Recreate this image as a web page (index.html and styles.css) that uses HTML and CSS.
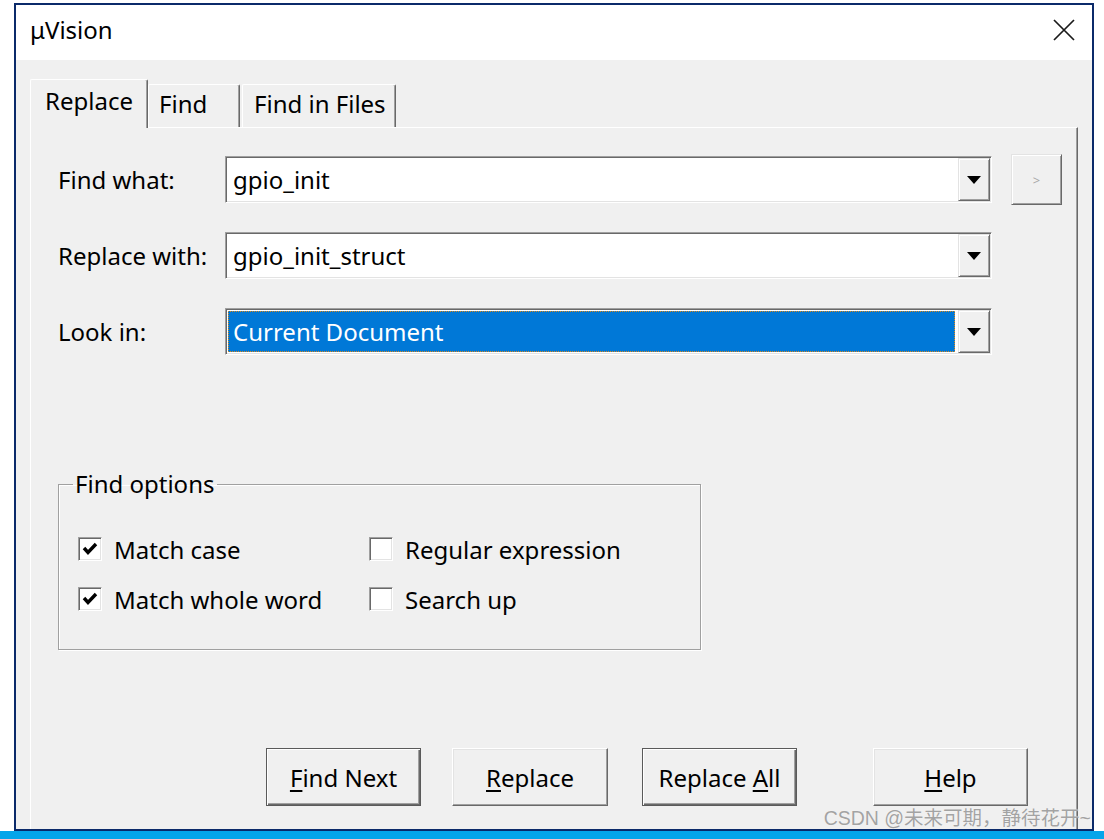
FILE: index.html
```html
<!DOCTYPE html>
<html>
<head>
<meta charset="utf-8">
<title>μVision</title>
<link rel="stylesheet" href="styles.css">
</head>
<body>
<div class="window">
  <div class="titlebar">
    <span class="title">μVision</span>
    <svg class="close" width="22" height="22" viewBox="0 0 22 22">
      <path d="M1 1 L21 21 M21 1 L1 21" stroke="#1a1a1a" stroke-width="1.7" fill="none"/>
    </svg>
  </div>
  <div class="client">
    <div class="tabs">
      <div class="tab tab-active">Replace</div>
      <div class="tab tab-find">Find</div>
      <div class="tab tab-files">Find in Files</div>
    </div>
    <div class="panel">
      <div class="field-row">
        <span class="field-label">Find what:</span>
        <div class="combo">
          <span class="combo-text">gpio_init</span>
          <span class="drop"><svg width="14" height="8" viewBox="0 0 14 8"><polygon points="0,0 14,0 7,8" fill="#000"/></svg></span>
        </div>
        <button class="more-btn">&gt;</button>
      </div>
      <div class="field-row">
        <span class="field-label">Replace with:</span>
        <div class="combo">
          <span class="combo-text">gpio_init_struct</span>
          <span class="drop"><svg width="14" height="8" viewBox="0 0 14 8"><polygon points="0,0 14,0 7,8" fill="#000"/></svg></span>
        </div>
      </div>
      <div class="field-row">
        <span class="field-label">Look in:</span>
        <div class="combo">
          <span class="combo-text combo-selected">Current Document</span>
          <span class="drop"><svg width="14" height="8" viewBox="0 0 14 8"><polygon points="0,0 14,0 7,8" fill="#000"/></svg></span>
        </div>
      </div>

      <fieldset class="options">
        <legend>Find options</legend>
        <div class="options-grid">
          <label class="check"><span class="box"><svg width="22" height="22" viewBox="0 0 22 22"><polyline points="5,10 9,14.5 17,6" stroke="#000" stroke-width="3.4" fill="none"/></svg></span>Match case</label>
          <label class="check"><span class="box"></span>Regular expression</label>
          <label class="check"><span class="box"><svg width="22" height="22" viewBox="0 0 22 22"><polyline points="5,10 9,14.5 17,6" stroke="#000" stroke-width="3.4" fill="none"/></svg></span>Match whole word</label>
          <label class="check"><span class="box"></span>Search up</label>
        </div>
      </fieldset>

      <div class="buttons">
        <button class="btn btn-default"><u>F</u>ind Next</button>
        <button class="btn btn-replace"><u>R</u>eplace</button>
        <button class="btn btn-default btn-all">Replace <u>A</u>ll</button>
        <button class="btn btn-help"><u>H</u>elp</button>
      </div>
    </div>
  </div>
</div>
<div class="taskbar"></div>
<div class="watermark">CSDN @未来可期，静待花开~</div>
</body>
</html>
```
FILE: styles.css
```css
html, body {
  margin: 0;
  padding: 0;
}
body {
  width: 1104px;
  height: 839px;
  overflow: hidden;
  background: #fff;
  position: relative;
  font-family: "Noto Sans", "Open Sans", sans-serif;
  color: #000;
}

.window {
  margin: 3px 0 0 14px;
  width: 1076px;
  height: 824px;
  border: 2px solid #0b2a6a;
  display: flex;
  flex-direction: column;
  overflow: hidden;
}

.titlebar {
  height: 55px;
  flex: none;
  background: #fff;
  display: flex;
  align-items: center;
  justify-content: space-between;
  padding: 0 17px 5px 14px;
  box-sizing: border-box;
}
.title {
  font-size: 24px;
  line-height: 30px;
}
.close {
  display: block;
}

.client {
  flex: 1;
  background: #f0f0f0;
  display: flex;
  flex-direction: column;
  padding: 19px 14px 0 14px;
  min-height: 0;
}

.tabs {
  display: flex;
  align-items: flex-end;
  height: 48px;
  flex: none;
}
.tab {
  box-sizing: border-box;
  height: 43px;
  border-top: 1px solid #fff;
  border-left: 1px solid #fff;
  border-right: 1px solid #696969;
  box-shadow: inset -1px 0 0 #a0a0a0;
  border-radius: 2px 2px 0 0;
  font-size: 24px;
  line-height: 38px;
  background: #f0f0f0;
}
.tab-active {
  width: 118px;
  height: 49px;
  margin-bottom: -1px;
  padding-left: 14px;
  line-height: 42px;
  position: relative;
  z-index: 1;
}
.tab-find {
  width: 92px;
  padding-left: 10px;
}
.tab-files {
  width: 154px;
  margin-left: 2px;
  padding-left: 11px;
}

.panel {
  flex: 1;
  border-top: 1px solid #fff;
  border-left: 1px solid #fff;
  border-right: 1px solid #696969;
  box-shadow: inset -1px 0 0 #a0a0a0;
  padding: 28px 0 0 27px;
}

.field-row {
  display: flex;
  align-items: center;
  height: 47px;
}
.field-row + .field-row {
  margin-top: 29px;
}
.field-label {
  width: 167px;
  font-size: 24px;
}
.combo {
  box-sizing: border-box;
  width: 767px;
  height: 47px;
  border: 1px solid;
  border-color: #a0a0a0 #fff #fff #a0a0a0;
  box-shadow: inset 1px 1px 0 #696969, inset -1px -1px 0 #e3e3e3;
  padding: 1px;
  background: #fff;
  display: flex;
}
.combo-text {
  flex: 1;
  display: flex;
  align-items: center;
  padding-left: 6px;
  font-size: 24px;
}
.combo-selected {
  margin: 1px 3px 1px 1px;
  padding-left: 4px;
  border: 1px dotted #d9891d;
  background: #0078d7;
  color: #fff;
}
.drop {
  box-sizing: border-box;
  width: 32px;
  border: 1px solid;
  border-color: #e3e3e3 #696969 #696969 #e3e3e3;
  box-shadow: inset 1px 1px 0 #fff, inset -1px -1px 0 #a0a0a0;
  background: #f0f0f0;
  display: flex;
  align-items: center;
  justify-content: center;
}
.drop svg {
  display: block;
}
.more-btn {
  box-sizing: border-box;
  margin-left: 19px;
  width: 51px;
  height: 51px;
  flex: none;
  border: 1px solid;
  border-color: #e3e3e3 #696969 #696969 #e3e3e3;
  box-shadow: inset 1px 1px 0 #fff, inset -1px -1px 0 #a0a0a0;
  background: #f0f0f0;
  color: #a8a8a8;
  font-family: "Noto Sans", sans-serif;
  font-size: 13px;
  padding: 0;
}

.options {
  box-sizing: border-box;
  width: 643px;
  margin: 115px 0 0 0;
  padding: 0 0 35px 14px;
  border: 1px solid #a0a0a0;
  box-shadow: inset 1px 1px 0 #fff, 1px 1px 0 #fff;
  min-width: 0;
}
.options legend {
  padding: 0 3px 0 2px;
  font-size: 24px;
  line-height: 28px;
}
.options-grid {
  display: grid;
  grid-template-columns: 291px auto;
  row-gap: 20px;
  margin: 36px 0 0 5px;
}
.check {
  display: flex;
  align-items: center;
  height: 30px;
  font-size: 24px;
}
.box {
  box-sizing: border-box;
  width: 24px;
  height: 24px;
  margin-right: 12px;
  border: 1px solid;
  border-color: #a0a0a0 #fff #fff #a0a0a0;
  box-shadow: inset 1px 1px 0 #696969, inset -1px -1px 0 #e3e3e3;
  background: #fff;
  flex: none;
}
.box svg {
  display: block;
}

.buttons {
  display: flex;
  margin: 98px 0 0 208px;
}
.btn {
  box-sizing: border-box;
  width: 155px;
  height: 58px;
  padding: 0;
  font-family: "Noto Sans", "Open Sans", sans-serif;
  font-size: 24px;
  color: #000;
  background: #f0f0f0;
  border: 1px solid;
  border-color: #fff #696969 #696969 #fff;
  box-shadow: inset -1px -1px 0 #a0a0a0, inset 1px 1px 0 #e3e3e3;
}
.btn u {
  text-underline-offset: 3px;
}
.btn-default {
  border: 1px solid #5a5a5a;
  box-shadow: inset 1px 1px 0 #fff, inset -1px -1px 0 #696969, inset -2px -2px 0 #a0a0a0;
}
.btn-replace {
  width: 156px;
  margin-left: 31px;
}
.btn-all {
  margin-left: 34px;
}
.btn-help {
  margin-left: 76px;
}

.taskbar {
  height: 8px;
  background: #05a5ea;
}

.watermark {
  position: absolute;
  right: 13px;
  top: 806px;
  font-family: "Liberation Sans", "Noto Sans CJK SC", sans-serif;
  font-size: 19.5px;
  line-height: 24px;
  color: #a3a3a3;
  text-shadow: 0 0 1px #fff;
  white-space: nowrap;
}
```
